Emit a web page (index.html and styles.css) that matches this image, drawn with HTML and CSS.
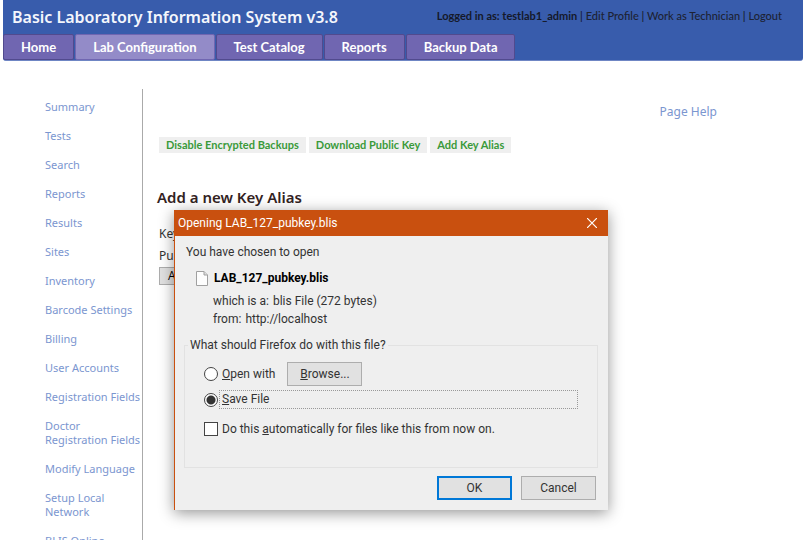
FILE: index.html
```html
<!DOCTYPE html>
<html lang="en">
<head>
<meta charset="utf-8">
<title>Basic Laboratory Information System</title>
<link rel="stylesheet" href="styles.css">
</head>
<body>
<header class="top">
  <div class="brand">
    <h1>Basic Laboratory Information System v3.8</h1>
    <div class="account"><strong>Logged in as: testlab1_admin</strong> | <a href="#">Edit Profile</a> | <a href="#">Work as Technician</a> | <a href="#">Logout</a></div>
  </div>
  <nav class="tabs">
    <a href="#">Home</a>
    <a href="#" class="active">Lab Configuration</a>
    <a href="#">Test Catalog</a>
    <a href="#">Reports</a>
    <a href="#">Backup Data</a>
  </nav>
</header>
<div class="page">
  <nav class="side">
    <a href="#">Summary</a>
    <a href="#">Tests</a>
    <a href="#">Search</a>
    <a href="#">Reports</a>
    <a href="#">Results</a>
    <a href="#">Sites</a>
    <a href="#">Inventory</a>
    <a href="#">Barcode Settings</a>
    <a href="#">Billing</a>
    <a href="#">User Accounts</a>
    <a href="#">Registration Fields</a>
    <a href="#">Doctor<br>Registration Fields</a>
    <a href="#">Modify Language</a>
    <a href="#">Setup Local<br>Network</a>
    <a href="#">BLIS Online</a>
  </nav>
  <main class="content">
    <a href="#" class="help">Page Help</a>
    <div class="actions">
      <a href="#">Disable Encrypted Backups</a>
      <a href="#">Download Public Key</a>
      <a href="#">Add Key Alias</a>
    </div>
    <h2>Add a new Key Alias</h2>
    <form class="alias">
      <span>Key</span>
      <span>Pub</span>
      <button type="button">Add</button>
    </form>
  </main>
</div>
<section class="dialog" role="dialog" aria-labelledby="dialog-title">
  <div class="titlebar">
    <span id="dialog-title">Opening LAB_127_pubkey.blis</span>
    <button type="button" class="close" aria-label="Close"><svg width="10" height="10" viewBox="0 0 10 10"><path d="M0 0L10 10M10 0L0 10" stroke="#fff" stroke-width="1.2"/></svg></button>
  </div>
  <div class="dialog-body">
    <p class="intro">You have chosen to open</p>
    <div class="file">
      <svg width="12" height="15" viewBox="0 0 12 15"><path d="M.5.5H8L11.5 4V14.5H.5Z" fill="#fdfdfd" stroke="#a0a0a0"/><path d="M8 .5V4H11.5" fill="#ddd" stroke="#a0a0a0"/></svg>
      <strong>LAB_127_pubkey.blis</strong>
    </div>
    <dl class="facts">
      <div><dt>which is a:</dt><dd>blis File (272 bytes)</dd></div>
      <div><dt>from:</dt><dd>http://localhost</dd></div>
    </dl>
    <fieldset>
      <legend>What should Firefox do with this file?</legend>
      <div class="row open">
        <input type="radio" name="action" id="open"><label for="open"><u>O</u>pen with</label>
        <button type="button" class="btn"><u>B</u>rowse...</button>
      </div>
      <div class="row save">
        <input type="radio" name="action" id="save" checked><label for="save" class="focused"><u>S</u>ave File</label>
      </div>
      <div class="row auto">
        <input type="checkbox" id="auto"><label for="auto">Do this <u>a</u>utomatically for files like this from now on.</label>
      </div>
    </fieldset>
    <div class="buttons">
      <button type="button" class="btn primary">OK</button>
      <button type="button" class="btn">Cancel</button>
    </div>
  </div>
</section>
</body>
</html>
```
FILE: styles.css
```css
* { box-sizing: border-box; }
html, body { height: 100%; }
body {
  margin: 0;
  overflow: hidden;
  background: #fff;
  color: #333;
  font: 12px/14px "Trebuchet MS", "Noto Sans", sans-serif;
}
a { text-decoration: none; }
h1, h2, p, dl, dd { margin: 0; }

.top {
  margin: 0 4px 0 3px;
  background: #385cac;
  border-bottom: 1px solid #6f86c4;
  border-radius: 0 0 3px 3px;
}
.brand {
  display: flex;
  justify-content: space-between;
  height: 34px;
  padding: 0 21px 0 9px;
}
.brand h1 { color: #f4f6fc; font-size: 16px; font-weight: 600; line-height: 35px; }
.account { color: #15192a; font: 500 11px/32px "Trebuchet MS", Lato, sans-serif; white-space: pre; }
.account strong { font-weight: 700; }
.account a { color: #1d2233; }
.tabs { display: flex; gap: 1px; }
.tabs a {
  padding: 0 17px;
  border: 1px solid #514a8e;
  border-radius: 2px;
  background: #7066b1;
  color: #fff;
  font: 700 13px/24px "Trebuchet MS", Lato, sans-serif;
}
.tabs .active { background: #938bc8; border-color: #7066b1; }

.page { display: flex; margin-top: 28px; }
.side {
  display: flex;
  flex-direction: column;
  gap: 15px;
  flex: none;
  width: 143px;
  padding: 11px 0 15px 45px;
  border-right: 1px solid #aaa;
  font-size: 11px;
  white-space: nowrap;
}
.side a, .help { color: #7b96d0; }
.content { flex: 1; padding: 15px 90px 0 14px; }
.help { display: block; text-align: right; font-size: 12px; line-height: 16px; }
.actions { display: flex; gap: 3px; margin-top: 17px; padding-left: 2px; }
.actions a {
  padding: 0 7px;
  background: #efefef;
  color: #3a9a3a;
  font: 700 11px/16px "Trebuchet MS", Lato, sans-serif;
}
.content h2 { margin-top: 34px; color: #33231f; font-size: 15px; font-weight: 600; line-height: 20px; }
.alias { display: flex; flex-direction: column; align-items: flex-start; margin-top: 16px; padding-left: 2px; line-height: 22px; }
.alias button { height: 18px; padding: 0 8px; border: 1px solid #adadad; background: #e1e1e1; font: 12px/14px "Open Sans", sans-serif; }

.dialog {
  position: absolute;
  left: 174px;
  top: 210px;
  width: 434px;
  background: #efefef;
  border-left: 1px solid #c9500f;
  box-shadow: 0 3px 14px rgba(0, 0, 0, .42);
  color: #333;
  font: 12px/18px "Segoe UI", Roboto, sans-serif;
}
.titlebar {
  display: flex;
  align-items: center;
  justify-content: space-between;
  height: 26px;
  padding: 0 11px 0 3px;
  background: #c9500f;
  color: #fff;
}
.close { display: flex; padding: 0; border: 0; background: none; }
.dialog-body { padding: 7px 10px 10px 9px; }
.intro { padding-left: 2px; }
.file { display: flex; align-items: center; gap: 6px; margin-top: 8px; padding-left: 12px; color: #000; }
.facts { margin-top: 5px; padding-left: 29px; }
.facts div { display: flex; gap: 4px; }
fieldset { margin: 8px 0 0; padding: 8px 19px 29px 19px; border: 1px solid #e2e2e2; }
legend { margin-left: -16px; padding: 0 2px; }
.row { display: flex; align-items: center; }
.row input {
  appearance: none;
  flex: none;
  width: 14px;
  height: 14px;
  margin: 0 4px 0 0;
  border: 1px solid #444;
  background: #fff;
}
.row input[type="radio"] { border-radius: 50%; }
.row input:checked { background: radial-gradient(circle, #333 0 4px, #fff 5px); }
.open label { margin-right: 12px; }
.save { margin-top: 4px; }
.save input { margin-right: 1px; }
.focused { flex: 1; padding: 0 2px; border: 1px dotted #999; line-height: 17px; }
.auto { margin-top: 11px; }
.btn {
  width: 75px;
  height: 24px;
  padding: 0;
  border: 1px solid #adadad;
  background: #e1e1e1;
  color: #333;
  font: inherit;
}
.btn.primary { border: 2px solid #0078d7; }
.buttons { display: flex; justify-content: flex-end; gap: 9px; margin-top: 8px; padding-right: 2px; }
```
